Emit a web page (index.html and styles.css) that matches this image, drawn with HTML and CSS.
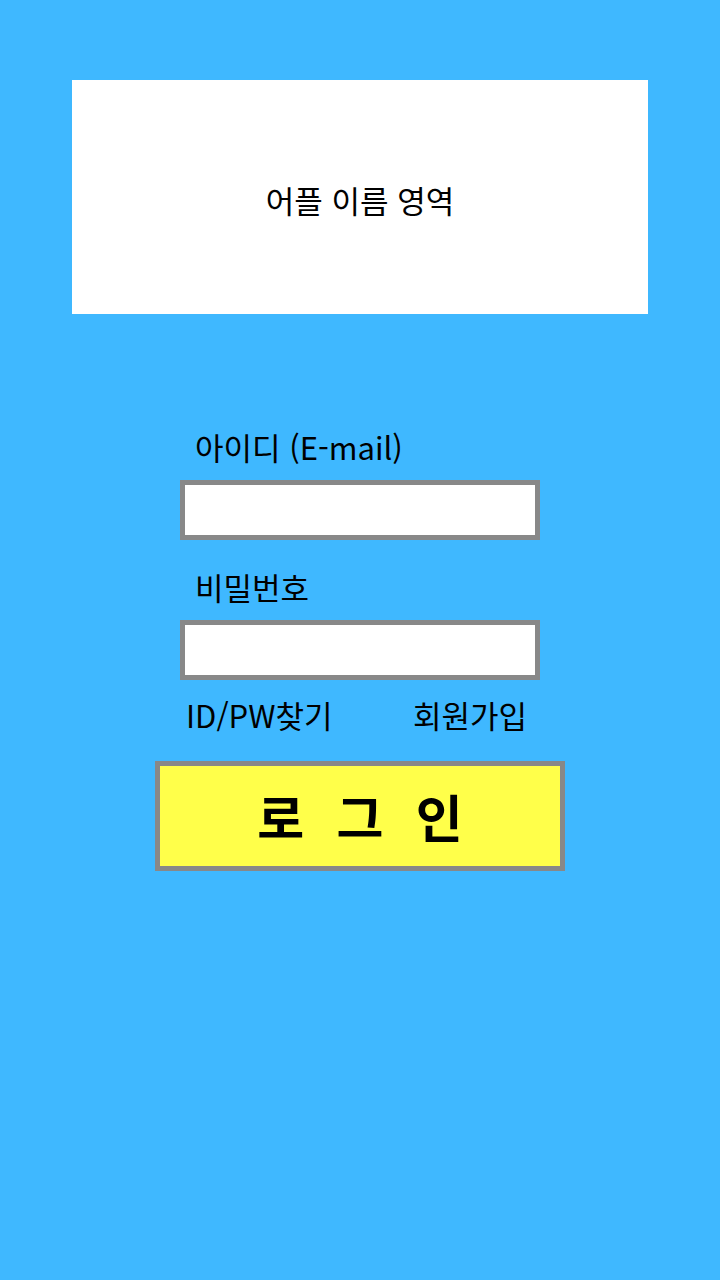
FILE: index.html
```html
<!DOCTYPE html>
<html lang="ko">
<head>
  <meta charset="UTF-8" />
  <meta name="viewport" content="width=device-width, initial-scale=1.0"/>
  <title>로그인</title>
  <link rel="stylesheet" href="styles.css">
</head>
<body>
  <!-- App name area -->
  <div class="app-title">어플 이름 영역</div>

  <!-- Login form -->
  <form class="login-form">
    <label class="field-label" for="userId">아이디 (E-mail)</label>
    <input class="field-input" type="email" id="userId" name="userId" />

    <label class="field-label second" for="userPw">비밀번호</label>
    <input class="field-input" type="password" id="userPw" name="userPw" />

    <div class="links">
      <a href="#">ID/PW찾기</a>
      <a href="#">회원가입</a>
    </div>

    <button type="submit" class="login-btn">로 그 인</button>
  </form>
</body>
</html>
```

FILE: styles.css
```css
/* Page */
body {
  margin: 0;
  min-height: 1280px;
  background: #3fb8ff;
  font-family: "Noto Sans CJK KR", "Noto Sans", sans-serif;
  color: #000;
}

/* App name box */
.app-title {
  width: 576px;
  height: 234px;
  margin: 80px auto 0;
  background: #fff;
  display: flex;
  align-items: center;
  justify-content: center;
  font-size: 31px;
  padding-top: 4px;
  box-sizing: border-box;
}

/* Form */
.login-form {
  width: 360px;
  margin: 116px auto 0;
  display: flex;
  flex-direction: column;
}

.field-label {
  display: block;
  font-size: 31px;
  line-height: 34px;
  padding: 0 0 16px 15px;
}

.field-label.second {
  margin-top: 30px;
}

.field-input {
  height: 60px;
  border: 5px solid #888;
  background: #fff;
  box-sizing: border-box;
  margin: 0;
  padding: 0 10px;
  font-size: 22px;
  outline: none;
}

/* Find / sign up links */
.links {
  display: flex;
  justify-content: space-between;
  margin-top: 18px;
  padding: 0 13px 0 6px;
  font-size: 31px;
  line-height: 34px;
}

.links a {
  color: #000;
  text-decoration: none;
}

/* Login button */
.login-btn {
  height: 110px;
  margin: 29px -25px 0;
  border: 5px solid #888;
  background: #ffff4a;
  font-family: inherit;
  font-size: 51px;
  font-weight: 700;
  letter-spacing: 9px;
  padding: 0 0 0 9px;
  cursor: pointer;
}
```
